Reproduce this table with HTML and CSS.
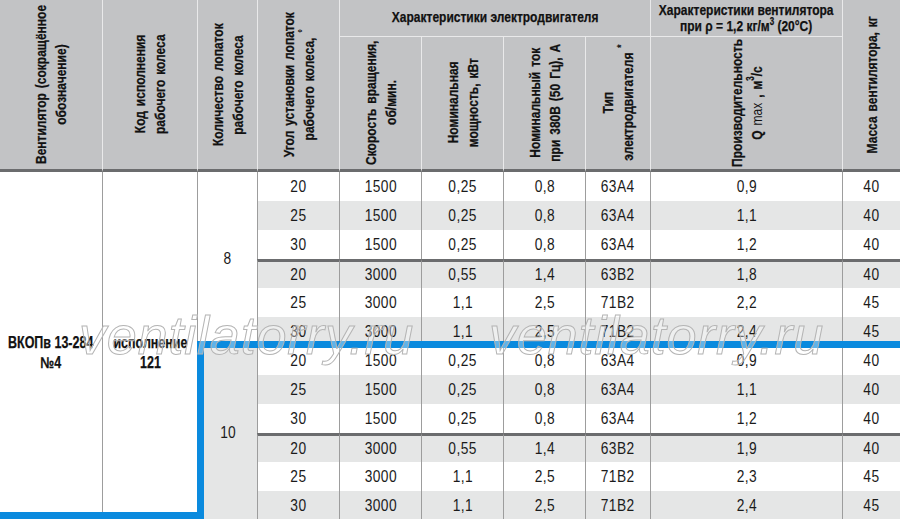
FILE: index.html
```html
<!DOCTYPE html>
<html lang="ru">
<head>
<meta charset="utf-8">
<title>ВКОПв 13-284 №4</title>
<link rel="stylesheet" href="styles.css">
</head>
<body>
<div class="page">
  <div class="table">
    <div class="h hs first"><div class="vt">Вентилятор (сокращённое<br>обозначение)</div></div>
    <div class="h hs"><div class="vt">Код исполнения<br>рабочего колеса</div></div>
    <div class="h hs"><div class="vt">Количество лопаток<br>рабочего колеса</div></div>
    <div class="h hs"><div class="vt">Угол установки лопаток<br>рабочего колеса, <sup>°</sup></div></div>
    <div class="h grp motor"><span class="n">Характеристики электродвигателя</span></div>
    <div class="h grp fan"><span class="n">Характеристики вентилятора<br>при ρ = 1,2 кг/м<sup>3</sup> (20°С)</span></div>
    <div class="h hs"><div class="vt">Масса вентилятора, кг</div></div>
    <div class="h sub"><div class="vt">Скорость вращения,<br>об/мин.</div></div>
    <div class="h sub"><div class="vt">Номинальная<br>мощность, кВт</div></div>
    <div class="h sub"><div class="vt">Номинальный ток<br>при 380В (50 Гц), А</div></div>
    <div class="h sub"><div class="vt">Тип<br>электродвигателя <sup>*</sup></div></div>
    <div class="h sub"><div class="vt">Производительность<br>Q <span class="max">max</span> , м<sup>3</sup>/с</div></div>

    <div class="name first"><span class="n">ВКОПв 13-284<br>№4</span></div>
    <div class="name"><span class="n">исполнение<br>121</span></div>
    <div class="blades"><span class="n">8</span></div>
    <div class="c"><span>20</span></div><div class="c"><span>1500</span></div><div class="c"><span>0,25</span></div><div class="c"><span>0,8</span></div><div class="c"><span>63A4</span></div><div class="c"><span>0,9</span></div><div class="c"><span>40</span></div>
    <div class="c g"><span>25</span></div><div class="c g"><span>1500</span></div><div class="c g"><span>0,25</span></div><div class="c g"><span>0,8</span></div><div class="c g"><span>63A4</span></div><div class="c g"><span>1,1</span></div><div class="c g"><span>40</span></div>
    <div class="c"><span>30</span></div><div class="c"><span>1500</span></div><div class="c"><span>0,25</span></div><div class="c"><span>0,8</span></div><div class="c"><span>63A4</span></div><div class="c"><span>1,2</span></div><div class="c"><span>40</span></div>
    <div class="c g t"><span>20</span></div><div class="c g t"><span>3000</span></div><div class="c g t"><span>0,55</span></div><div class="c g t"><span>1,4</span></div><div class="c g t"><span>63B2</span></div><div class="c g t"><span>1,8</span></div><div class="c g t"><span>40</span></div>
    <div class="c"><span>25</span></div><div class="c"><span>3000</span></div><div class="c"><span>1,1</span></div><div class="c"><span>2,5</span></div><div class="c"><span>71B2</span></div><div class="c"><span>2,2</span></div><div class="c"><span>45</span></div>
    <div class="c g"><span>30</span></div><div class="c g"><span>3000</span></div><div class="c g"><span>1,1</span></div><div class="c g"><span>2,5</span></div><div class="c g"><span>71B2</span></div><div class="c g"><span>2,4</span></div><div class="c g"><span>45</span></div>
    <div class="blades g"><span class="n">10</span></div>
    <div class="c"><span>20</span></div><div class="c"><span>1500</span></div><div class="c"><span>0,25</span></div><div class="c"><span>0,8</span></div><div class="c"><span>63A4</span></div><div class="c"><span>0,9</span></div><div class="c"><span>40</span></div>
    <div class="c g"><span>25</span></div><div class="c g"><span>1500</span></div><div class="c g"><span>0,25</span></div><div class="c g"><span>0,8</span></div><div class="c g"><span>63A4</span></div><div class="c g"><span>1,1</span></div><div class="c g"><span>40</span></div>
    <div class="c"><span>30</span></div><div class="c"><span>1500</span></div><div class="c"><span>0,25</span></div><div class="c"><span>0,8</span></div><div class="c"><span>63A4</span></div><div class="c"><span>1,2</span></div><div class="c"><span>40</span></div>
    <div class="c g t"><span>20</span></div><div class="c g t"><span>3000</span></div><div class="c g t"><span>0,55</span></div><div class="c g t"><span>1,4</span></div><div class="c g t"><span>63B2</span></div><div class="c g t"><span>1,9</span></div><div class="c g t"><span>40</span></div>
    <div class="c"><span>25</span></div><div class="c"><span>3000</span></div><div class="c"><span>1,1</span></div><div class="c"><span>2,5</span></div><div class="c"><span>71B2</span></div><div class="c"><span>2,3</span></div><div class="c"><span>45</span></div>
    <div class="c g"><span>30</span></div><div class="c g"><span>3000</span></div><div class="c g"><span>1,1</span></div><div class="c g"><span>2,5</span></div><div class="c g"><span>71B2</span></div><div class="c g"><span>2,4</span></div><div class="c g"><span>45</span></div>
  </div>
  <div class="frame"></div>
  <div class="frame-bottom"></div>
  <div class="wm wm1">ventilatorry.ru</div>
  <div class="wm wm2">ventilatorry.ru</div>
</div>
</body>
</html>
```

FILE: styles.css
```css
html, body {
  margin: 0;
  padding: 0;
  background: #ffffff;
}
body {
  width: 900px;
  height: 519px;
  overflow: hidden;
}
.page {
  position: relative;
  width: 900px;
  height: 519px;
  overflow: hidden;
  font-family: "Liberation Sans", Arial, sans-serif;
  color: #1b1b1b;
}
.table {
  display: grid;
  grid-template-columns: 102px 95px 60px 82px 82px 82px 82px 65px 192px 58px;
  grid-template-rows: 37px 135px repeat(12, 29px);
}
.n {
  display: inline-block;
  white-space: nowrap;
  transform: scaleX(0.8);
}
.h {
  background: #c2c3c5;
  border-left: 1px solid #e9e9ea;
  box-sizing: border-box;
  display: flex;
  align-items: center;
  justify-content: center;
  font-weight: bold;
  font-size: 15px;
  color: #111111;
  -webkit-text-stroke: 0.25px #111111;
}
.h.first, .name.first { border-left: none; }
.hs {
  grid-row: span 2;
  border-bottom: 3px solid #6b6c6e;
}
.grp {
  border-bottom: 1px solid #e9e9ea;
  text-align: center;
  line-height: 16px;
}
.motor { grid-column: span 4; padding-bottom: 2px; }
.fan { padding-bottom: 1px; }
.sub {
  border-bottom: 3px solid #6b6c6e;
}
.vt {
  writing-mode: vertical-rl;
  transform: rotate(180deg) scaleY(0.8);
  text-align: center;
  line-height: 20px;
  white-space: nowrap;
  word-spacing: 2px;
  flex-shrink: 0;
}
.vt sup, .grp sup {
  font-size: 10px;
  line-height: 0;
}
.max { font-weight: normal; -webkit-text-stroke: 0; }
.name {
  grid-row: span 12;
  border-left: 1px solid #9d9d9d;
  box-sizing: border-box;
  display: flex;
  align-items: center;
  justify-content: center;
  text-align: center;
  font-weight: bold;
  font-size: 16px;
  line-height: 20px;
  padding-top: 14px;
  background: #ffffff;
  color: #111111;
  -webkit-text-stroke: 0.25px #111111;
}
.name .n { transform: scaleX(0.78); }
.blades {
  grid-column: 3;
  grid-row: span 6;
  border-left: 1px solid #9d9d9d;
  box-sizing: border-box;
  display: flex;
  align-items: center;
  justify-content: center;
  font-size: 16px;
  background: #ffffff;
}
.blades .n { transform: scaleX(0.86); }
.c {
  border-left: 1px solid #9d9d9d;
  box-sizing: border-box;
  display: flex;
  align-items: center;
  justify-content: center;
  font-size: 16px;
  background: #ffffff;
}
.c span {
  display: inline-block;
  white-space: nowrap;
  letter-spacing: 0.5px;
  transform: scaleX(0.86);
}
.g { background: #e5e6e6; }
.t { border-top: 3px solid #6b6c6e; padding-bottom: 1px; }
.frame {
  position: absolute;
  left: 197px;
  top: 341px;
  right: 0;
  bottom: 0;
  border-top: 7px solid #0a8ade;
  border-left: 7px solid #0a8ade;
}
.frame-bottom {
  position: absolute;
  left: 0;
  top: 512px;
  width: 204px;
  height: 7px;
  background: #0a8ade;
}
.wm {
  position: absolute;
  top: 310px;
  font-family: "Liberation Sans", Arial, sans-serif;
  font-style: italic;
  font-size: 54px;
  line-height: 50px;
  letter-spacing: 0.8px;
  color: rgba(255, 255, 255, 0.35);
  -webkit-text-stroke: 1px #b4b4b4;
  white-space: nowrap;
}
.wm1 { left: 79px; }
.wm2 { left: 489px; }
```
